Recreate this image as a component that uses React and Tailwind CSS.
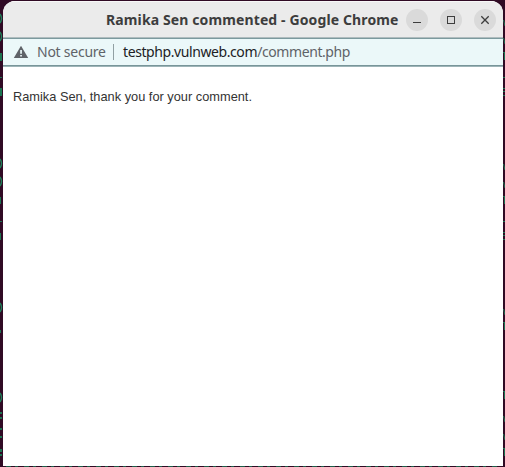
const LEFT_MARKS = [
  [330, 3, 1], [197, 7, 1], [53, 8, 2], [77, 1, 2], [88, 8, 2],
  [221, 1, 2], [233, 7, 1],
  [412, 2, 2], [417, 2, 2],
  [428, 2, 2], [436, 2, 2], [449, 3, 2], [454, 2, 2],
];

const LEFT_CURVES = [14, 32, 159, 177, 303, 393];
const RIGHT_LETTERS = [20, 38, 164, 182, 309, 416, 434];
const RIGHT_STEMS = [52, 196, 322, 391, 448];
const RIGHT_LINES = [77, 88, 91, 95, 221, 232, 235, 239];

function TerminalBackdrop() {
  return (
    <svg className="absolute inset-0 h-full w-full" viewBox="0 0 505 467" fill="none">
      {LEFT_MARKS.map(([y, h, w]) => (
        <rect key={y} x="0" y={y} width={w} height={h} fill="#1b7450" />
      ))}
      {LEFT_CURVES.map((y) => (
        <path key={y} d={`M0 ${y}Q3 ${y + 4.5} 0 ${y + 9}`} stroke="#1f8059" strokeWidth="1.4" />
      ))}
      {RIGHT_LETTERS.map((y) => (
        <path key={y} d={`M503.5 ${y}L505 ${y + 6}`} stroke="#1b7450" strokeWidth="1" />
      ))}
      {RIGHT_STEMS.map((y) => (
        <path key={y} d={`M503 ${y + 0.5}H505M504.5 ${y}V${y + 8}`} stroke="#1b7450" strokeWidth="1" />
      ))}
      {RIGHT_LINES.map((y) => (
        <rect key={y} x="503" y={y} width="2" height="1" fill="#1b7450" />
      ))}
      <path d="M6 466.5H499" stroke="#1b5d47" strokeDasharray="5 4 3 6" />
    </svg>
  );
}

function WindowButton({ label, children }) {
  return (
    <button aria-label={label} className="flex size-[22px] items-center justify-center rounded-full bg-[#dadada]">
      <svg className="size-[22px]" viewBox="0 0 22 22" fill="none" stroke="#3d3d3d">
        {children}
      </svg>
    </button>
  );
}

export default function App() {
  return (
    <div className="relative h-[467px] w-[505px] overflow-hidden bg-[#300a24] pt-px pr-[2px] pb-px pl-[3px]">
      <TerminalBackdrop />
      <div className="relative flex h-[465px] w-[500px] flex-col overflow-hidden rounded-t-[12px] bg-white">
        <header className="flex h-9 shrink-0 items-center border-t border-[#f8f8f8] bg-[#ebebeb] pl-[103px]">
          <h1 className="w-[300px] whitespace-nowrap font-['Noto_Sans',sans-serif] text-[14px] leading-5 font-bold tracking-[0.12px] text-[#3d3d3d]">
            Ramika Sen commented - Google Chrome
          </h1>
          <div className="flex gap-3">
            <WindowButton label="Minimize">
              <path d="M7 13.5H15" />
            </WindowButton>
            <WindowButton label="Maximize">
              <rect x="7.5" y="7.5" width="7" height="7" />
            </WindowButton>
            <WindowButton label="Close">
              <path d="M7.3 7.3L14.7 14.7M14.7 7.3L7.3 14.7" strokeWidth="1.3" />
            </WindowButton>
          </div>
        </header>
        <div className="h-[2px] shrink-0 border-t border-[#b0bcbe] bg-[#7c9a9e]" />
        <div className="flex h-[26px] shrink-0 items-center bg-[#ebf8f9] pl-[10px] font-['Noto_Sans',sans-serif] text-[14px] leading-5 whitespace-nowrap">
          <svg className="h-[14px] w-4" viewBox="0 0 16 14">
            <path d="M8 .7L15.2 13H.8Z" fill="#5f6368" />
            <path d="M7.2 5h1.7v3.8H7.2zM7.2 10h1.7v1.5H7.2z" fill="#ebf8f9" />
          </svg>
          <span className="ml-2 w-[76px] tracking-[-0.25px] text-[#5f6368]">Not secure</span>
          <span className="h-4 w-px bg-[#91a0a3]" />
          <span className="ml-[9px] tracking-[-0.41px] text-[#202124]">
            testphp.vulnweb.com<span className="text-[#5f6368]">/comment.php</span>
          </span>
        </div>
        <div className="h-[2px] shrink-0 border-b border-[#9db4b7] bg-[#789599]" />
        <main className="px-[10px] pt-[22px] font-['Liberation_Sans',Arial,sans-serif] text-[12.8px] leading-4 text-[#333333]">
          <p>Ramika Sen, thank you for your comment.</p>
        </main>
      </div>
    </div>
  );
}
